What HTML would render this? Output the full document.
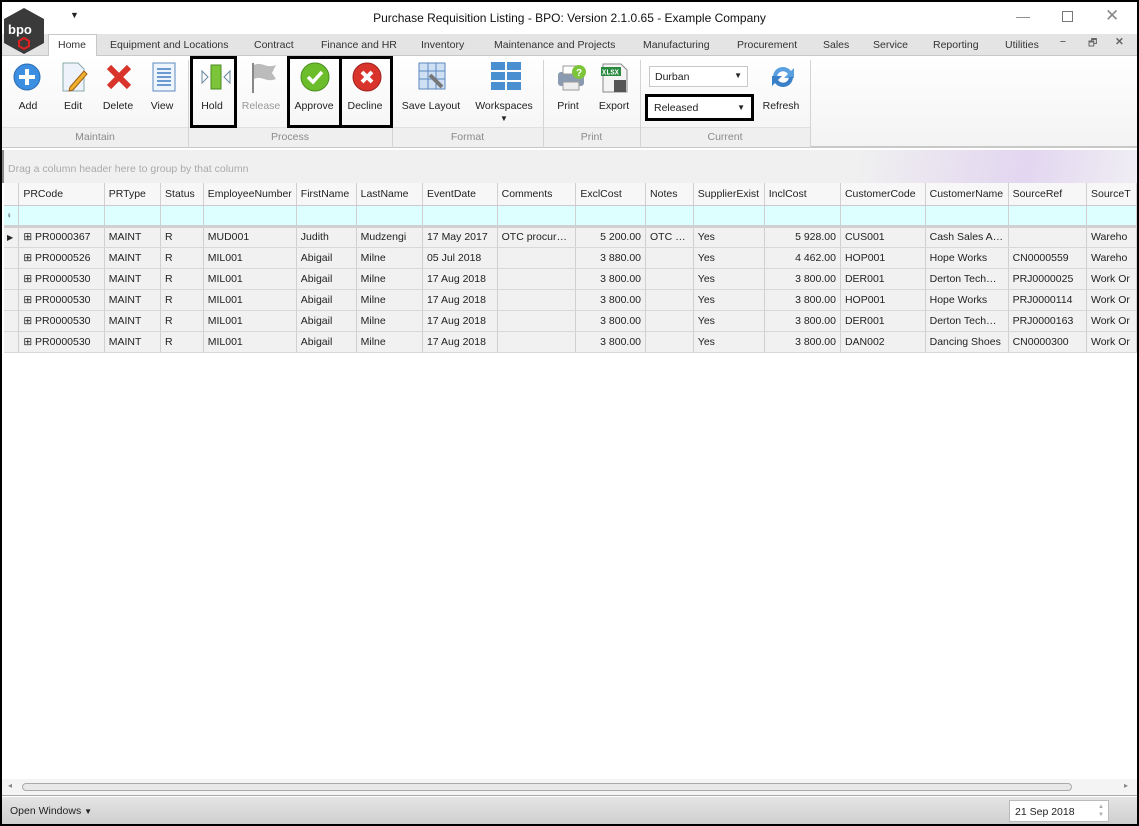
<!DOCTYPE html>
<html><head><style>
*{margin:0;padding:0;box-sizing:border-box}
body{width:1139px;height:826px;overflow:hidden;font-family:"Liberation Sans",sans-serif;font-size:10.5px;color:#222;background:#000;position:relative}
#win{position:absolute;left:2px;top:2px;width:1135px;height:822px;background:#fff;overflow:hidden}
.a{position:absolute}
.tab{position:absolute;top:37px;font-size:10.5px;color:#333}
.btn{position:absolute;top:98px;font-size:10.5px;text-align:center}
.grp{position:absolute;top:129px;font-size:10.5px;color:#8a8a8a;text-align:center}
.sep{position:absolute;top:58px;width:1px;height:88px;background:#d4d4d4}
table{border-collapse:collapse;position:absolute;left:2px;top:181px;table-layout:fixed}
td{height:21px;border-right:1px solid #d0d0d0;border-bottom:1px solid #d8d8d8;padding:0 4px;white-space:nowrap;overflow:hidden;font-size:10.5px}
tr.h td{background:#f7f7f7;height:22px;border-bottom:1px solid #ccc}
tr.f td{background:#ddffff;height:21px;border-bottom:3px solid #d0d0d0}
tr.d td{background:#f1f1f1}
.r{text-align:right}
.box{position:absolute;border:3px solid #000}
</style></head><body><div id="win">
<div class="a" style="left:0;top:0;width:1135px;height:32px;background:#fff"></div>
<div class="a" style="left:68px;top:8px;font-size:9px">▼</div>
<div class="a" style="left:0;top:9px;width:1135px;text-align:center;font-size:12px;color:#111">Purchase Requisition Listing - BPO: Version 2.1.0.65 - Example Company</div>
<div class="a" style="left:1014px;top:6px;font-size:14px;color:#888">—</div>
<div class="a" style="left:1060px;top:9px;width:11px;height:11px;border:1px solid #777"></div>
<div class="a" style="left:1103px;top:4px;font-size:17px;color:#888">✕</div>
<div class="a" style="left:0;top:32px;width:1135px;height:22px;background:#e4e4e4;border-bottom:1px solid #c8c8c8"></div>
<div class="a" style="left:46px;top:32px;width:49px;height:23px;background:#fff;border:1px solid #c8c8c8;border-bottom:none"></div>
<div class="a" style="left:2px;top:6px;width:40px;height:46px;z-index:5">
<svg width="40" height="46"><polygon points="20,0 40,11 40,35 20,46 0,35 0,11" fill="#3a3a3a"/><text x="4" y="26" fill="#fff" font-size="13" font-family="Liberation Sans" font-weight="bold">bpo</text><polygon points="20,30 25,33 25,38 20,41 15,38 15,33" fill="none" stroke="#e02020" stroke-width="2"/></svg></div>
<div class="tab" style="left:56px">Home</div>
<div class="tab" style="left:108px">Equipment and Locations</div>
<div class="tab" style="left:252px">Contract</div>
<div class="tab" style="left:319px">Finance and HR</div>
<div class="tab" style="left:419px">Inventory</div>
<div class="tab" style="left:492px">Maintenance and Projects</div>
<div class="tab" style="left:641px">Manufacturing</div>
<div class="tab" style="left:735px">Procurement</div>
<div class="tab" style="left:821px">Sales</div>
<div class="tab" style="left:871px">Service</div>
<div class="tab" style="left:931px">Reporting</div>
<div class="tab" style="left:1003px">Utilities</div>
<div class="tab" style="left:1058px;top:33px;color:#666;font-weight:bold">–</div>
<div class="tab" style="left:1086px;top:34px;color:#666;font-size:10px">🗗</div>
<div class="tab" style="left:1113px;top:34px;color:#666;font-weight:bold">✕</div>
<div class="a" style="left:0;top:54px;width:1135px;height:92px;background:linear-gradient(#fff,#f3f3f3);border-bottom:2px solid #c8c8c8"></div>
<div class="a" style="left:0;top:125px;width:808px;height:20px;background:#efefef;border-top:1px solid #e0e0e0"></div>
<div class="sep" style="left:186px"></div><div class="sep" style="left:390px"></div><div class="sep" style="left:541px"></div><div class="sep" style="left:638px"></div><div class="sep" style="left:808px"></div>
<svg class="a" style="left:10px;top:60px" width="30" height="30"><circle cx="15" cy="15" r="13" fill="#3b8ee0" stroke="#2a6bb0"/><path d="M15 7v16M7 15h16" stroke="#fff" stroke-width="4"/></svg>
<svg class="a" style="left:58px;top:59px" width="28" height="32"><path d="M3 2h15l6 6v22H3z" fill="#eef3fb" stroke="#8aa"/><path d="M10 26l14-16 3 3-14 16-4 1z" fill="#f0b030" stroke="#a06010"/></svg>
<svg class="a" style="left:103px;top:61px" width="28" height="28"><path d="M4 4l20 20M24 4L4 24" stroke="#d9342b" stroke-width="6"/></svg>
<svg class="a" style="left:149px;top:59px" width="26" height="32"><rect x="2" y="2" width="22" height="28" fill="#eef4fc" stroke="#5b88c0"/><path d="M6 8h14M6 12h14M6 16h14M6 20h14M6 24h14" stroke="#6a9ad0" stroke-width="2"/></svg>
<svg class="a" style="left:198px;top:61px" width="32" height="28"><rect x="11" y="2" width="10" height="24" fill="#7cc43a" stroke="#4a8a20"/><path d="M2 8l6 6-6 6z M30 8l-6 6 6 6z" fill="none" stroke="#6a8aa0"/></svg>
<svg class="a" style="left:247px;top:59px" width="30" height="32"><path d="M4 2v30" stroke="#888" stroke-width="2"/><path d="M5 4c8-4 12 4 22 0l-4 8 4 6c-10 4-14-4-22 0z" fill="#bbb"/></svg>
<svg class="a" style="left:298px;top:60px" width="30" height="30"><circle cx="15" cy="15" r="14" fill="#6cbd2c" stroke="#4a9020"/><path d="M8 15l5 5 9-10" stroke="#fff" stroke-width="3.5" fill="none"/></svg>
<svg class="a" style="left:350px;top:60px" width="30" height="30"><circle cx="15" cy="15" r="14" fill="#d9342b" stroke="#a02020"/><path d="M10 10l10 10M20 10L10 20" stroke="#fff" stroke-width="4"/></svg>
<svg class="a" style="left:416px;top:59px" width="30" height="32"><rect x="1" y="2" width="26" height="26" fill="#cfe0f4" stroke="#5b88c0"/><path d="M1 10h26M1 18h26M10 2v26M18 2v26" stroke="#5b88c0"/><path d="M12 14l12 12" stroke="#777" stroke-width="4"/></svg>
<svg class="a" style="left:488px;top:59px" width="32" height="30"><g fill="#4a8fd0"><rect x="1" y="1" width="14" height="8"/><rect x="17" y="1" width="14" height="8"/><rect x="1" y="11" width="14" height="8"/><rect x="17" y="11" width="14" height="8"/><rect x="1" y="21" width="14" height="8"/><rect x="17" y="21" width="14" height="8"/></g></svg>
<svg class="a" style="left:553px;top:60px" width="32" height="30"><rect x="3" y="10" width="26" height="14" rx="3" fill="#8a9ab0"/><rect x="8" y="4" width="16" height="8" fill="#fff" stroke="#999"/><rect x="8" y="20" width="16" height="8" fill="#eee" stroke="#999"/><circle cx="24" cy="10" r="7" fill="#7cc43a"/><text x="21" y="14" font-size="10" fill="#fff" font-weight="bold">?</text></svg>
<svg class="a" style="left:598px;top:60px" width="30" height="32"><path d="M3 2h18l6 6v22H3z" fill="#f4f4f4" stroke="#888"/><rect x="1" y="5" width="20" height="9" fill="#2a8a40"/><text x="2" y="12.5" font-size="7" fill="#fff" font-family="Liberation Mono" font-weight="bold">XLSX</text><rect x="14" y="18" width="12" height="12" fill="#555"/></svg>
<svg class="a" style="left:765px;top:60px" width="32" height="30"><path d="M6 15a10 10 0 0 1 18-6l3-3v10h-10l4-4a6 6 0 0 0-11 3z" fill="#5aa0e0"/><path d="M26 15a10 10 0 0 1-18 6l-3 3v-10h10l-4 4a6 6 0 0 0 11-3z" fill="#3a80c8"/></svg>
<div class="btn" style="left:8px;width:36px">Add</div>
<div class="btn" style="left:56px;width:30px">Edit</div>
<div class="btn" style="left:97px;width:38px">Delete</div>
<div class="btn" style="left:145px;width:30px">View</div>
<div class="btn" style="left:190px;width:40px">Hold</div>
<div class="btn" style="left:236px;width:46px;color:#999">Release</div>
<div class="btn" style="left:287px;width:50px">Approve</div>
<div class="btn" style="left:338px;width:50px">Decline</div>
<div class="btn" style="left:396px;width:66px">Save Layout</div>
<div class="btn" style="left:470px;width:64px">Workspaces<br><span style="font-size:8px">▼</span></div>
<div class="btn" style="left:549px;width:34px">Print</div>
<div class="btn" style="left:592px;width:40px">Export</div>
<div class="btn" style="left:755px;width:48px">Refresh</div>
<div class="a" style="left:647px;top:64px;width:99px;height:21px;border:1px solid #c8c8c8;background:#fff;padding:4px 5px">Durban<span style="position:absolute;right:5px;top:4px;font-size:8px">▼</span></div>
<div class="a" style="left:643px;top:92px;width:109px;height:27px;border:3px solid #000;background:#fff;padding:5px 6px">Released<span style="position:absolute;right:6px;top:6px;font-size:8px">▼</span></div>
<div class="grp" style="left:0;width:186px">Maintain</div>
<div class="grp" style="left:186px;width:204px">Process</div>
<div class="grp" style="left:390px;width:151px">Format</div>
<div class="grp" style="left:541px;width:97px">Print</div>
<div class="grp" style="left:638px;width:170px">Current</div>
<div class="box" style="left:188px;top:54px;width:47px;height:72px"></div>
<div class="box" style="left:285px;top:54px;width:55px;height:72px"></div>
<div class="box" style="left:337px;top:54px;width:54px;height:72px"></div>
<div class="a" style="left:0;top:148px;width:1135px;height:33px;background:linear-gradient(100deg,#f0f0f0 75%,#e2d6f0 90%,#f0eef4 100%);border-left:2px solid #888"></div>
<div class="a" style="left:6px;top:161px;color:#aaa">Drag a column header here to group by that column</div>
<table>
<colgroup><col style="width:15px"><col style="width:86px"><col style="width:57px"><col style="width:43px"><col style="width:93px"><col style="width:60px"><col style="width:67px"><col style="width:75px"><col style="width:79px"><col style="width:71px"><col style="width:48px"><col style="width:71px"><col style="width:78px"><col style="width:85px"><col style="width:83px"><col style="width:79px"><col style="width:50px"></colgroup>
<tr class="h"><td></td><td>PRCode</td><td>PRType</td><td>Status</td><td>EmployeeNumber</td><td>FirstName</td><td>LastName</td><td>EventDate</td><td>Comments</td><td>ExclCost</td><td>Notes</td><td>SupplierExist</td><td>InclCost</td><td>CustomerCode</td><td>CustomerName</td><td>SourceRef</td><td>SourceT</td></tr>
<tr class="f"><td style="font-size:8px;padding:0 2px">♀</td><td></td><td></td><td></td><td></td><td></td><td></td><td></td><td></td><td></td><td></td><td></td><td></td><td></td><td></td><td></td><td></td></tr>
<tr class="d"><td style="font-size:8px;padding:0 3px">▶</td><td>⊞ PR0000367</td><td>MAINT</td><td>R</td><td>MUD001</td><td>Judith</td><td>Mudzengi</td><td>17 May 2017</td><td>OTC procur…</td><td class="r">5 200.00</td><td>OTC …</td><td>Yes</td><td class="r">5 928.00</td><td>CUS001</td><td>Cash Sales A…</td><td></td><td>Wareho</td></tr>
<tr class="d"><td></td><td>⊞ PR0000526</td><td>MAINT</td><td>R</td><td>MIL001</td><td>Abigail</td><td>Milne</td><td>05 Jul 2018</td><td></td><td class="r">3 880.00</td><td></td><td>Yes</td><td class="r">4 462.00</td><td>HOP001</td><td>Hope Works</td><td>CN0000559</td><td>Wareho</td></tr>
<tr class="d"><td></td><td>⊞ PR0000530</td><td>MAINT</td><td>R</td><td>MIL001</td><td>Abigail</td><td>Milne</td><td>17 Aug 2018</td><td></td><td class="r">3 800.00</td><td></td><td>Yes</td><td class="r">3 800.00</td><td>DER001</td><td>Derton Tech…</td><td>PRJ0000025</td><td>Work Or</td></tr>
<tr class="d"><td></td><td>⊞ PR0000530</td><td>MAINT</td><td>R</td><td>MIL001</td><td>Abigail</td><td>Milne</td><td>17 Aug 2018</td><td></td><td class="r">3 800.00</td><td></td><td>Yes</td><td class="r">3 800.00</td><td>HOP001</td><td>Hope Works</td><td>PRJ0000114</td><td>Work Or</td></tr>
<tr class="d"><td></td><td>⊞ PR0000530</td><td>MAINT</td><td>R</td><td>MIL001</td><td>Abigail</td><td>Milne</td><td>17 Aug 2018</td><td></td><td class="r">3 800.00</td><td></td><td>Yes</td><td class="r">3 800.00</td><td>DER001</td><td>Derton Tech…</td><td>PRJ0000163</td><td>Work Or</td></tr>
<tr class="d"><td></td><td>⊞ PR0000530</td><td>MAINT</td><td>R</td><td>MIL001</td><td>Abigail</td><td>Milne</td><td>17 Aug 2018</td><td></td><td class="r">3 800.00</td><td></td><td>Yes</td><td class="r">3 800.00</td><td>DAN002</td><td>Dancing Shoes</td><td>CN0000300</td><td>Work Or</td></tr>
</table>
<div class="a" style="left:0;top:777px;width:1135px;height:17px;background:#f4f4f4;border-bottom:1px solid #aaa"></div>
<div class="a" style="left:20px;top:781px;width:1050px;height:8px;border:1px solid #aaa;border-radius:4px;background:#e8e8e8"></div>
<div class="a" style="left:6px;top:779px;font-size:8px;color:#888">◂</div>
<div class="a" style="left:1122px;top:779px;font-size:8px;color:#888">▸</div>
<div class="a" style="left:0;top:795px;width:1135px;height:27px;background:linear-gradient(#e4e4e4,#cfcfcf)"></div>
<div class="a" style="left:8px;top:803px">Open Windows <span style="font-size:8px">▼</span></div>
<div class="a" style="left:1007px;top:798px;width:100px;height:22px;background:#fff;border:1px solid #bbb;padding:5px 5px">21 Sep 2018<span style="position:absolute;right:4px;top:2px;font-size:6px;color:#aaa;line-height:8px">▲<br>▼</span></div>
</div></body></html>
